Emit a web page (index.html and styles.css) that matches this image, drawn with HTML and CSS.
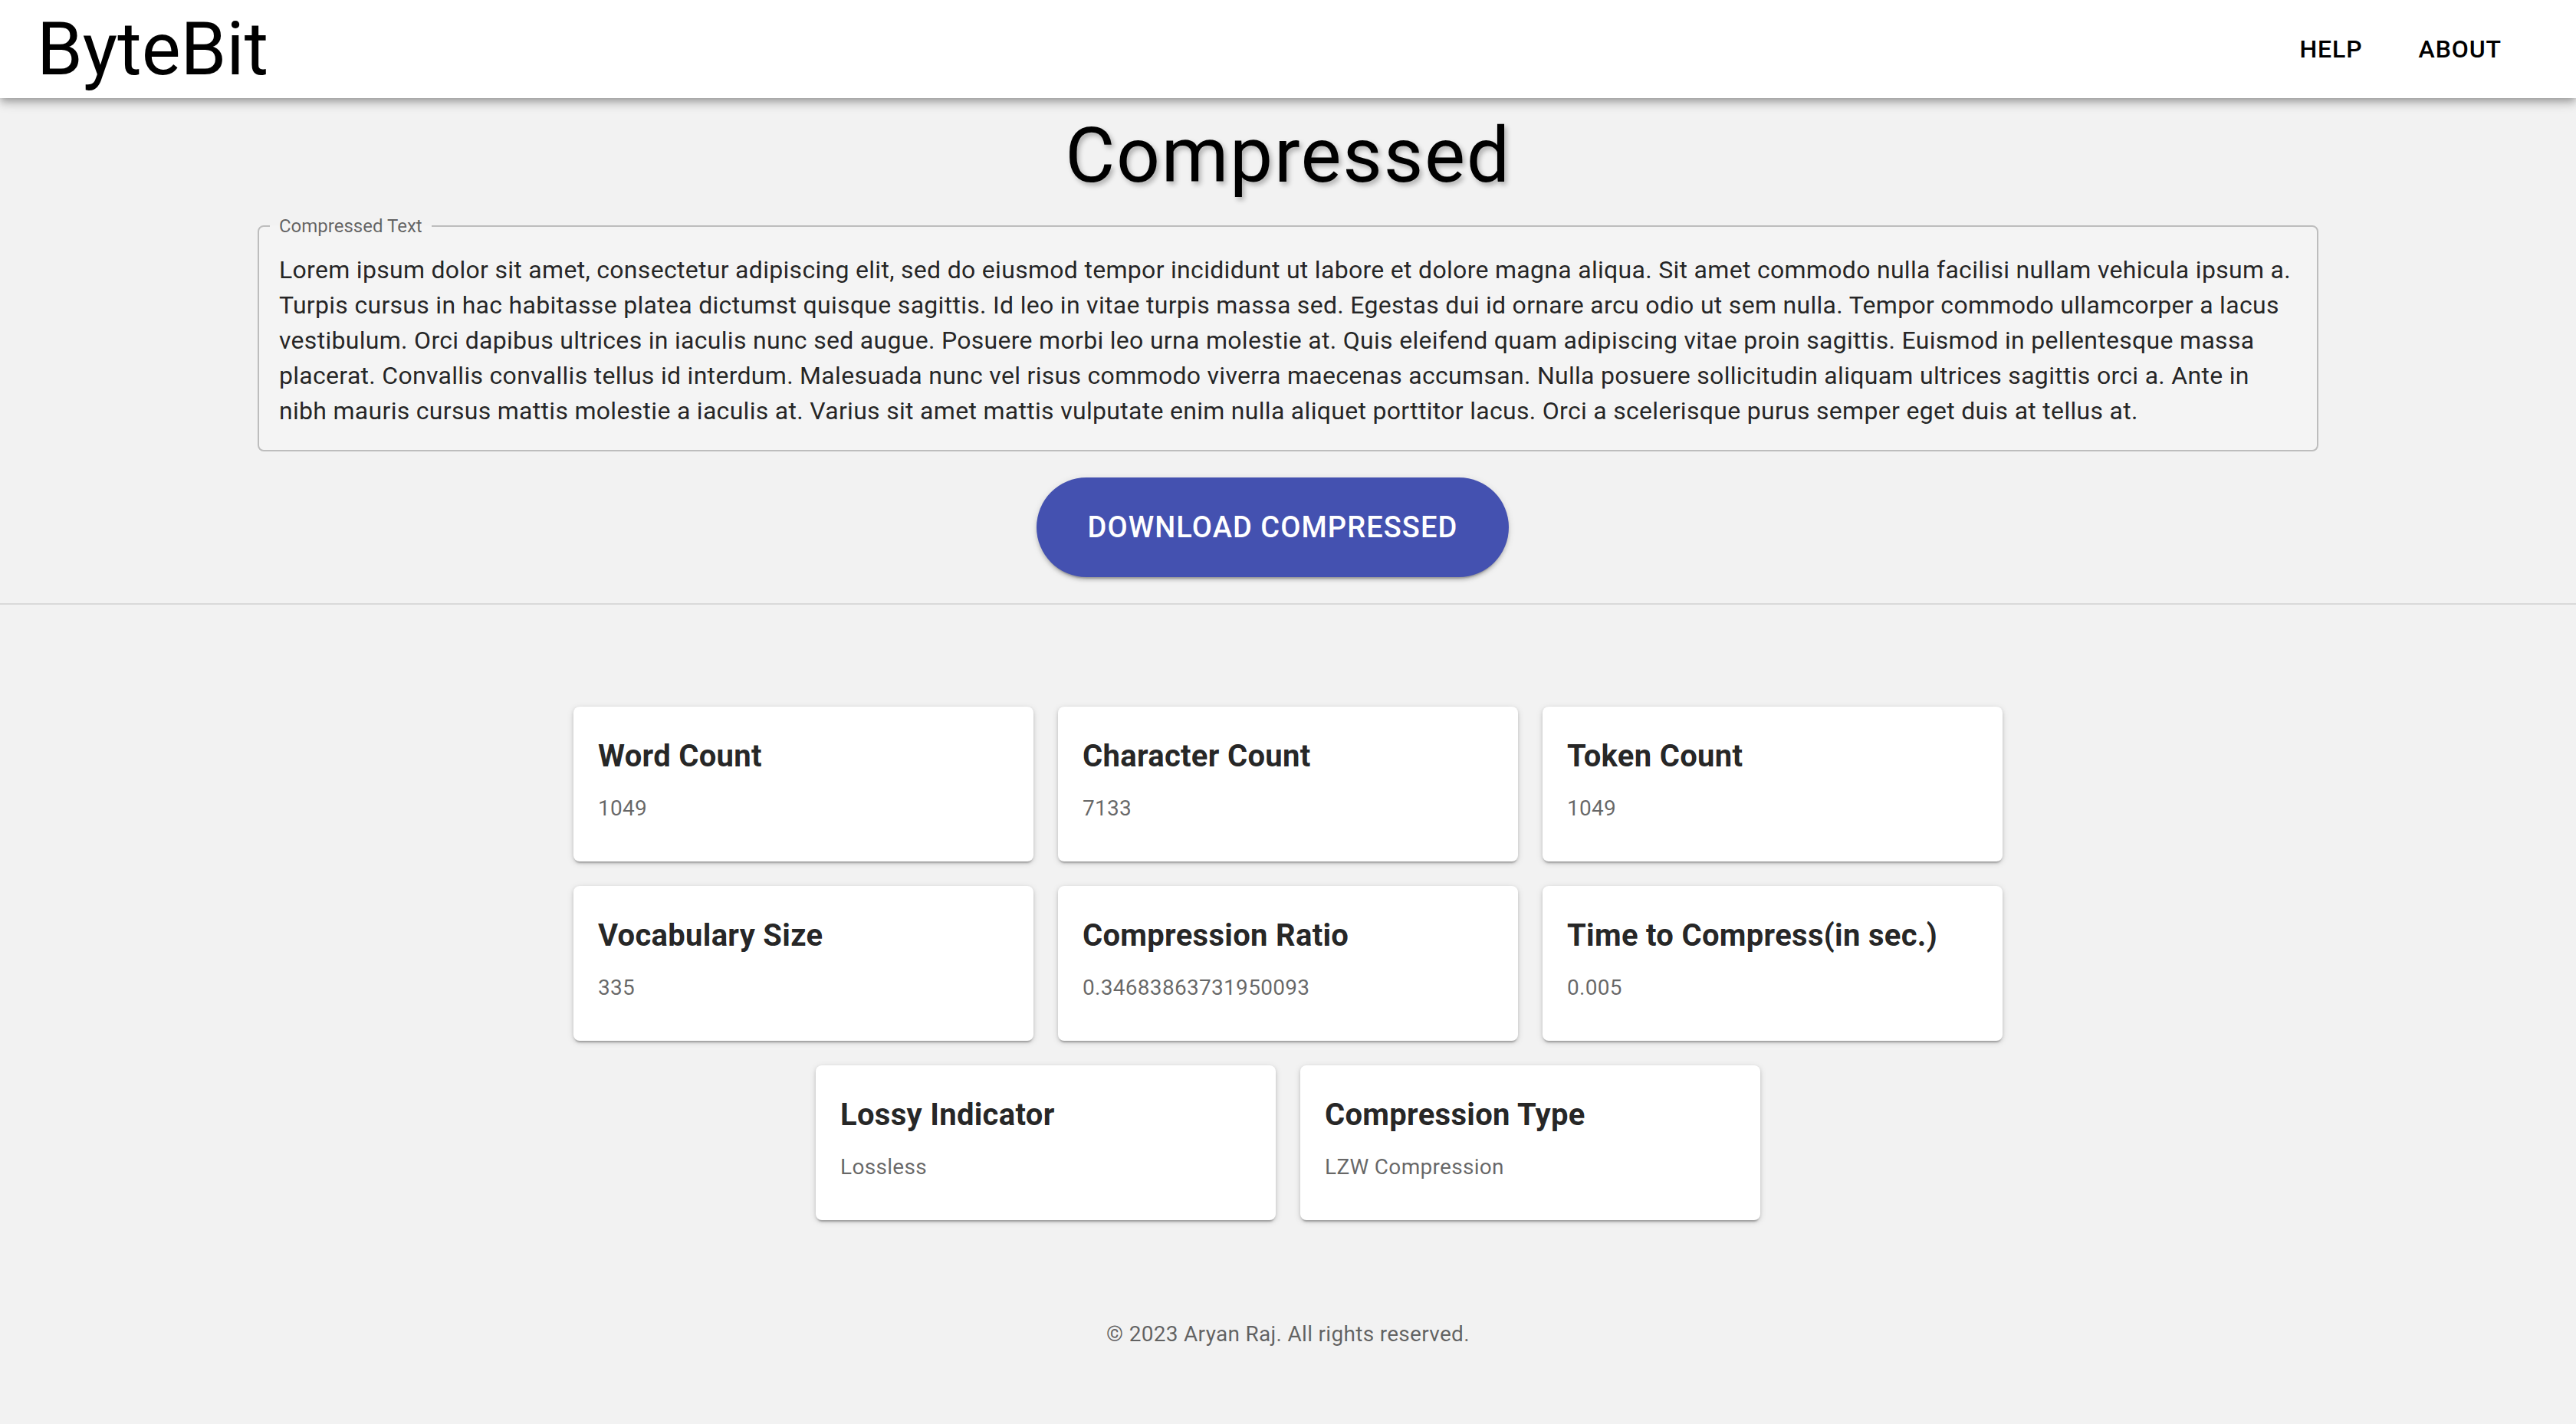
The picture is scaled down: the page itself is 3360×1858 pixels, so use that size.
FILE: index.html
```html
<!DOCTYPE html>
<html lang="en">
<head>
<meta charset="utf-8">
<title>ByteBit - Compressed</title>
<link rel="stylesheet" href="styles.css">
</head>
<body>
<header class="appbar">
  <div class="logo">ByteBit</div>
  <nav class="nav">
    <a class="nav-btn" href="#">HELP</a>
    <a class="nav-btn" href="#">ABOUT</a>
  </nav>
</header>
<main>
  <section class="top">
    <h1 class="title">Compressed</h1>
    <fieldset class="field">
      <legend class="field-label">Compressed Text</legend>
      <p class="field-text">Lorem ipsum dolor sit amet, consectetur adipiscing elit, sed do eiusmod tempor incididunt ut labore et dolore magna aliqua. Sit amet commodo nulla facilisi nullam vehicula ipsum a. Turpis cursus in hac habitasse platea dictumst quisque sagittis. Id leo in vitae turpis massa sed. Egestas dui id ornare arcu odio ut sem nulla. Tempor commodo ullamcorper a lacus vestibulum. Orci dapibus ultrices in iaculis nunc sed augue. Posuere morbi leo urna molestie at. Quis eleifend quam adipiscing vitae proin sagittis. Euismod in pellentesque massa placerat. Convallis convallis tellus id interdum. Malesuada nunc vel risus commodo viverra maecenas accumsan. Nulla posuere sollicitudin aliquam ultrices sagittis orci a. Ante in nibh mauris cursus mattis molestie a iaculis at. Varius sit amet mattis vulputate enim nulla aliquet porttitor lacus. Orci a scelerisque purus semper eget duis at tellus at.</p>
    </fieldset>
    <div class="actions">
      <button class="btn" type="button">DOWNLOAD COMPRESSED</button>
    </div>
  </section>
  <hr class="divider">
  <section class="stats">
    <div class="card"><h2 class="card-title">Word Count</h2><p class="card-value">1049</p></div>
    <div class="card"><h2 class="card-title">Character Count</h2><p class="card-value">7133</p></div>
    <div class="card"><h2 class="card-title">Token Count</h2><p class="card-value">1049</p></div>
    <div class="card"><h2 class="card-title">Vocabulary Size</h2><p class="card-value">335</p></div>
    <div class="card"><h2 class="card-title">Compression Ratio</h2><p class="card-value">0.34683863731950093</p></div>
    <div class="card"><h2 class="card-title">Time to Compress(in sec.)</h2><p class="card-value">0.005</p></div>
    <div class="card"><h2 class="card-title">Lossy Indicator</h2><p class="card-value">Lossless</p></div>
    <div class="card"><h2 class="card-title">Compression Type</h2><p class="card-value">LZW Compression</p></div>
  </section>
  <footer class="footer">© 2023 Aryan Raj. All rights reserved.</footer>
</main>
</body>
</html>
```
FILE: styles.css
```css
* { box-sizing: border-box; }

html, body {
  margin: 0;
  padding: 0;
}

body {
  background: #f2f2f2;
  font-family: Roboto, "Liberation Sans", Arial, sans-serif;
  color: rgba(0, 0, 0, 0.87);
}

.appbar {
  height: 128px;
  background: #ffffff;
  display: flex;
  align-items: center;
  justify-content: space-between;
  padding: 0 81px 0 48px;
  box-shadow: 0 4px 8px -2px rgba(0,0,0,0.2), 0 8px 10px 0 rgba(0,0,0,0.14), 0 2px 20px 0 rgba(0,0,0,0.12);
  position: relative;
  z-index: 2;
}

.logo {
  font-size: 96px;
  font-weight: 400;
  color: #000;
  line-height: normal;
}

.nav {
  display: flex;
  align-items: center;
  gap: 41px;
}

.nav-btn {
  font-size: 32px;
  font-weight: 500;
  letter-spacing: 0.91px;
  color: #000;
  text-decoration: none;
  padding: 12px 16px;
  line-height: 1.75;
}

.top {
  display: flex;
  flex-direction: column;
  align-items: center;
}

.title {
  margin: 16px 0 0;
  font-size: 100px;
  font-weight: 400;
  line-height: 117px;
  letter-spacing: 1.7px;
  color: #000;
  text-shadow: 3px 4px 6px rgba(0, 0, 0, 0.28);
}

.field {
  width: 2688px;
  margin: 22px 0 0;
  padding: 0 26px 28px 26px;
  border: 2px solid #bdbdbd;
  border-radius: 8px;
  background: #f4f4f4;
  min-inline-size: 0;
}

.field-label {
  font-size: 24px;
  line-height: 24px;
  color: rgba(0, 0, 0, 0.6);
  padding: 0 12px;
  margin-left: -12px;
}

.field-text {
  margin: 22px 0 0;
  font-size: 32px;
  line-height: 46px;
  letter-spacing: 0.3px;
  color: rgba(0, 0, 0, 0.87);
}

.actions {
  margin-top: 34px;
  display: flex;
  justify-content: center;
}

.btn {
  height: 130px;
  width: 616px;
  margin-right: 40px;
  border: none;
  border-radius: 65px;
  background: #4451b0;
  color: #ffffff;
  font-family: Roboto, "Liberation Sans", Arial, sans-serif;
  font-size: 38px;
  font-weight: 500;
  letter-spacing: 1.09px;
  box-shadow: 0 6px 2px -4px rgba(0,0,0,0.2), 0 4px 4px 0 rgba(0,0,0,0.14), 0 2px 10px 0 rgba(0,0,0,0.12);
  cursor: pointer;
}

.divider {
  margin: 34px 0 0;
  border: none;
  border-top: 2px solid #d9d9d9;
  height: 0;
}

.stats {
  width: 1864px;
  margin: 0 auto;
  padding-top: 133px;
  display: flex;
  flex-wrap: wrap;
  justify-content: center;
  gap: 32px;
}

.card {
  width: 600px;
  background: #ffffff;
  border-radius: 8px;
  padding: 33px 32px 49px;
  box-shadow: 0 4px 2px -2px rgba(0,0,0,0.2), 0 2px 4px 0 rgba(0,0,0,0.14), 0 2px 10px 0 rgba(0,0,0,0.12);
}

.card-title {
  margin: 0 0 16px;
  font-size: 40px;
  font-weight: 700;
  line-height: 64px;
  letter-spacing: 0.3px;
  color: rgba(0, 0, 0, 0.87);
}

.card-value {
  margin: 0;
  font-size: 28px;
  line-height: 40px;
  letter-spacing: 0.3px;
  color: rgba(0, 0, 0, 0.6);
}

.footer {
  margin-top: 129px;
  padding-bottom: 99px;
  text-align: center;
  font-size: 28px;
  line-height: 40px;
  letter-spacing: 0.3px;
  color: rgba(0, 0, 0, 0.6);
}
```
